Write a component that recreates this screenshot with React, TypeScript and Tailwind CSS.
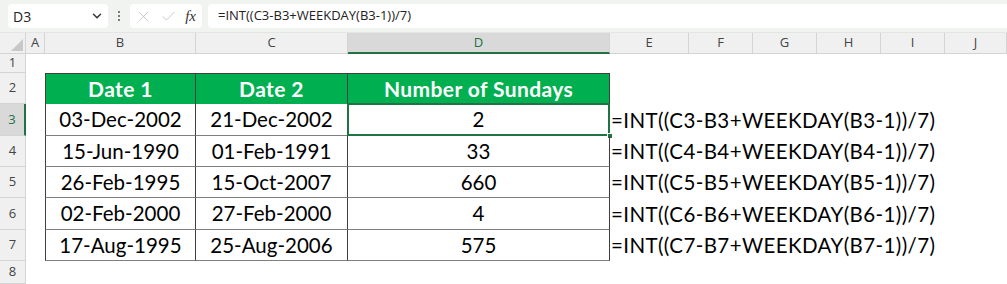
import { ChevronDown, X, Check } from "lucide-react";

const rows = [
  ["03-Dec-2002", "21-Dec-2002", "2"],
  ["15-Jun-1990", "01-Feb-1991", "33"],
  ["26-Feb-1995", "15-Oct-2007", "660"],
  ["02-Feb-2000", "27-Feb-2000", "4"],
  ["17-Aug-1995", "25-Aug-2006", "575"],
];

const cols = ["A", "B", "C", "D", "E", "F", "G", "H", "I", "J"];
const rowHeights = ["h-[19px]", "h-[31px]", "h-[32px]", "h-[31px]", "h-[31px]", "h-[32px]", "h-[31px]", "h-[23px]"];

const cellFont = { fontFamily: "Lato, 'Noto Sans', sans-serif" };

export default function App() {
  return (
    <div className="w-[1007px] h-[284px] overflow-hidden bg-white" style={{ fontFamily: "'Open Sans', 'Noto Sans', sans-serif" }}>
      {/* formula bar */}
      <div className="h-[33px] bg-[#f1f3f0] flex items-center pl-2 gap-[6px] border-b border-[#e4e6e3]">
        <div className="w-[100px] h-[24px] bg-white rounded-[4px] flex items-center justify-between pl-[5px] pr-[4px] text-[14px] text-[#222]">
          <span>D3</span>
          <ChevronDown size={14} strokeWidth={2.5} className="text-[#333]" />
        </div>
        <div className="flex flex-col gap-[2px] px-[4px]">
          <span className="w-[2px] h-[2px] bg-[#555] rounded-full" />
          <span className="w-[2px] h-[2px] bg-[#555] rounded-full" />
          <span className="w-[2px] h-[2px] bg-[#555] rounded-full" />
        </div>
        <div className="w-[72px] h-[24px] bg-white rounded-[4px] flex items-center justify-between pl-[5px] pr-[6px]">
          <X size={17} strokeWidth={1} className="text-[#b5b5b5]" />
          <Check size={17} strokeWidth={1} className="text-[#b5b5b5]" />
          <span className="text-[15px] italic text-[#333]" style={{ fontFamily: "'Liberation Serif', serif" }}>fx</span>
        </div>
        <div className="flex-1 h-[24px] bg-white rounded-l-[4px] flex items-center pl-[10px] text-[13px] text-[#222]">
          =INT((C3-B3+WEEKDAY(B3-1))/7)
        </div>
      </div>

      {/* grid */}
      <div className="grid grid-cols-[26px_19px_151px_152px_262px_79px_64px_64px_64px_64px_1fr]">
        {/* header row */}
        <div className="h-[21px] bg-[#f0f0f0] border-b border-r border-[#d4d4d4] relative">
          <div className="absolute right-[2px] bottom-[2px] w-0 h-0 border-l-[12px] border-l-transparent border-b-[12px] border-b-[#c8c8c8]" />
        </div>
        {cols.map((c) => (
          <div
            key={c}
            className={
              c === "D"
                ? "h-[21px] bg-[#d9d9d9] border-b-2 border-[#217346] border-r border-r-[#d4d4d4] flex items-center justify-center text-[13px] text-[#217346]"
                : "h-[21px] bg-[#f0f0f0] border-b border-r border-[#d4d4d4] flex items-center justify-center text-[13px] text-[#444]"
            }
          >
            {c}
          </div>
        ))}

        {rowHeights.map((h, r) => {
          const rn = r + 1;
          const dataIdx = rn - 3;
          return [
            <div
              key={`rh${rn}`}
              className={
                rn === 3
                  ? `${h} bg-[#d9d9d9] border-r-2 border-r-[#217346] border-b border-b-[#d4d4d4] flex items-center justify-center text-[13px] text-[#217346]`
                  : `${h} bg-[#f0f0f0] border-r border-b border-[#d4d4d4] flex items-center justify-center text-[13px] text-[#444]`
              }
            >
              {rn}
            </div>,
            <div key={`a${rn}`} className={h} />,
            ...[0, 1, 2].map((ci) => {
              if (rn === 2) {
                const label = ["Date 1", "Date 2", "Number of Sundays"][ci];
                return (
                  <div
                    key={`h${ci}`}
                    className={`${h} bg-[#00b050] border-t border-[#3f3f3f] ${ci === 0 ? "border-l" : ""} border-r flex items-center justify-center text-white font-bold text-[21px] tracking-[0.4px]`}
                    style={cellFont}
                  >
                    {label}
                  </div>
                );
              }
              if (dataIdx >= 0 && dataIdx < 5) {
                const selected = rn === 3 && ci === 2;
                return (
                  <div
                    key={`c${ci}`}
                    className={`${h} relative border-b border-[#7f7f7f] ${ci === 0 ? "border-l border-l-[#3f3f3f]" : ""} border-r border-r-[#3f3f3f] flex items-center justify-center text-[20.5px] text-black`}
                    style={cellFont}
                  >
                    {selected && (
                      <>
                        <div className="absolute -left-[1px] -top-[1px] -right-[1px] -bottom-[1px] border-2 border-[#217346]" />
                        <div className="absolute -right-[4px] -bottom-[4px] w-[6px] h-[6px] bg-[#217346] border border-white" />
                      </>
                    )}
                    {rows[dataIdx][ci]}
                  </div>
                );
              }
              return <div key={`e${ci}`} className={h} />;
            }),
            <div key={`f${rn}`} className={`${h} col-span-6 flex items-center`}>
              {dataIdx >= 0 && dataIdx < 5 && (
                <span className="whitespace-nowrap pl-[1px] text-[20.5px] text-black tracking-[0.4px]" style={cellFont}>
                  {`=INT((C${rn}-B${rn}+WEEKDAY(B${rn}-1))/7)`}
                </span>
              )}
            </div>,
          ];
        })}
      </div>
    </div>
  );
}
